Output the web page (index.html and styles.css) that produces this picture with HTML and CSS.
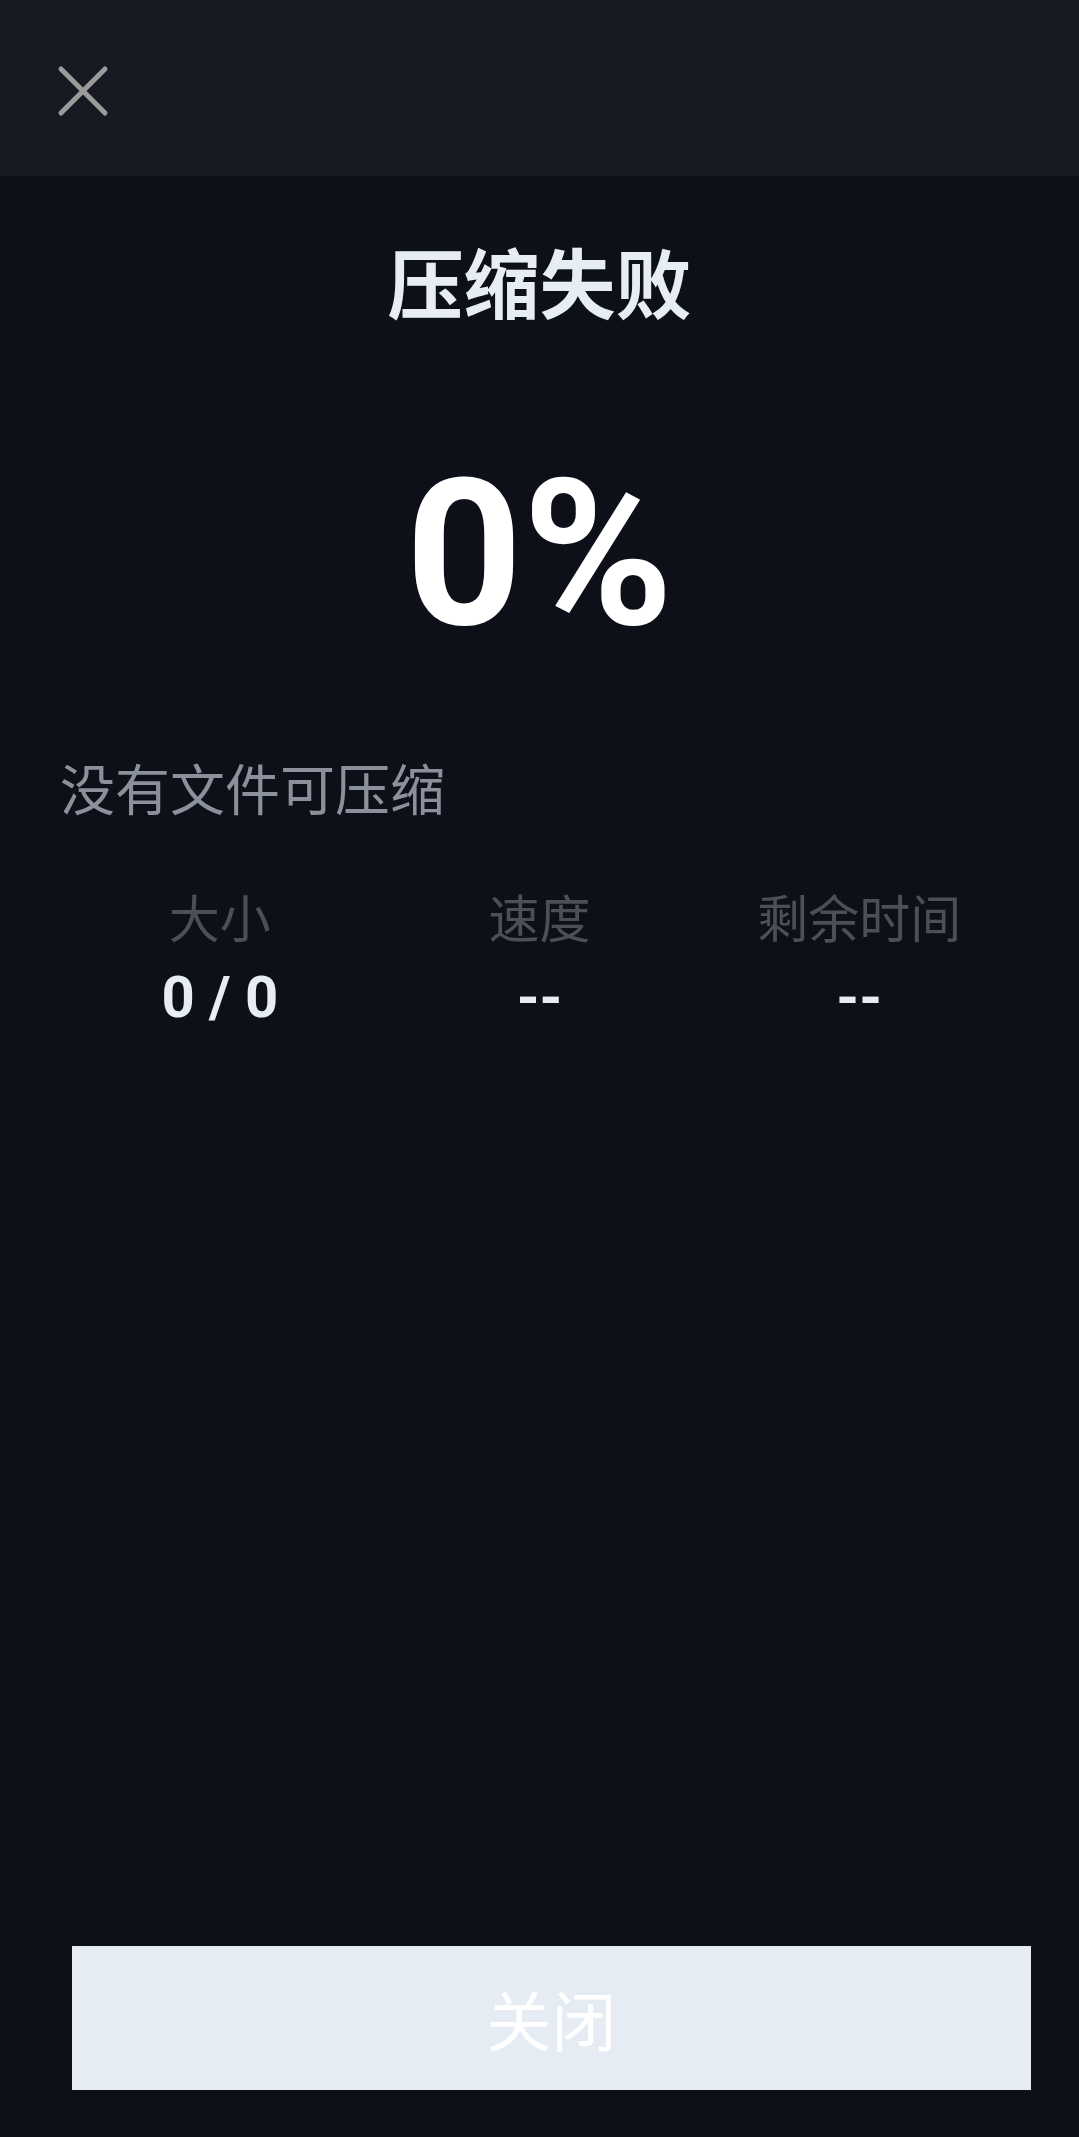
FILE: index.html
```html
<!DOCTYPE html>
<html lang="zh-CN">
<head>
    <meta charset="UTF-8">
    <meta name="viewport" content="width=device-width, initial-scale=1.0">
    <title>压缩失败</title>
    <link rel="stylesheet" href="styles.css">
</head>
<body>

    <div class="page">
        <!-- Bar atas dengan tombol tutup -->
        <div class="topbar">
            <span class="close-icon">
                <svg width="54" height="54" viewBox="0 0 54 54">
                    <path d="M5 5 L49 49 M49 5 L5 49" stroke="#9b9b9b" stroke-width="5" stroke-linecap="round" fill="none"/>
                </svg>
            </span>
        </div>

        <div class="content">
            <h1 class="title">压缩失败</h1>
            <div class="percent">0%</div>
            <p class="message">没有文件可压缩</p>

            <div class="stats">
                <div class="stat">
                    <div class="stat-label">大小</div>
                    <div class="stat-value">0 / 0</div>
                </div>
                <div class="stat">
                    <div class="stat-label">速度</div>
                    <div class="stat-value">--</div>
                </div>
                <div class="stat">
                    <div class="stat-label">剩余时间</div>
                    <div class="stat-value">--</div>
                </div>
            </div>
        </div>

        <button class="close-btn">关闭</button>
    </div>

</body>
</html>
```

FILE: styles.css
```css
html, body {
    margin: 0;
    padding: 0;
}
body {
    font-family: Roboto, "Noto Sans CJK SC", sans-serif;
    background-color: #0d1018;
    color: #e6edf5;
}
.page {
    min-height: 100vh;
    display: flex;
    flex-direction: column;
}
.topbar {
    height: 176px;
    background-color: #171a22;
    display: flex;
    align-items: center;
    padding: 6px 0 0 56px;
    box-sizing: border-box;
}
.close-icon {
    display: flex;
    width: 54px;
    height: 54px;
}
.content {
    padding: 0 60px;
}
.title {
    margin: 73px 0 0;
    font-size: 76px;
    line-height: 76px;
    font-weight: 700;
    text-align: center;
    color: #e6edf5;
}
.percent {
    margin-top: 128px;
    font-size: 204px;
    line-height: 204px;
    font-weight: 700;
    text-align: center;
    color: #ffffff;
}
.message {
    margin: 107px 0 0;
    font-size: 55px;
    line-height: 55px;
    color: #8b919b;
}
.stats {
    margin-top: 76px;
    display: grid;
    grid-template-columns: repeat(3, 1fr);
}
.stat {
    text-align: center;
}
.stat-label {
    font-size: 51px;
    line-height: 51px;
    color: #4b5058;
}
.stat-value {
    margin-top: 22px;
    font-size: 58px;
    line-height: 58px;
    font-weight: 700;
    color: #e6edf5;
}
/* Tombol tutup di bawah */
.close-btn {
    margin: auto 48px 47px 72px;
    height: 144px;
    border: none;
    background-color: #e5ecf3;
    color: #ffffff;
    font-family: Roboto, "Noto Sans CJK SC", sans-serif;
    font-size: 65px;
    cursor: pointer;
}
```
